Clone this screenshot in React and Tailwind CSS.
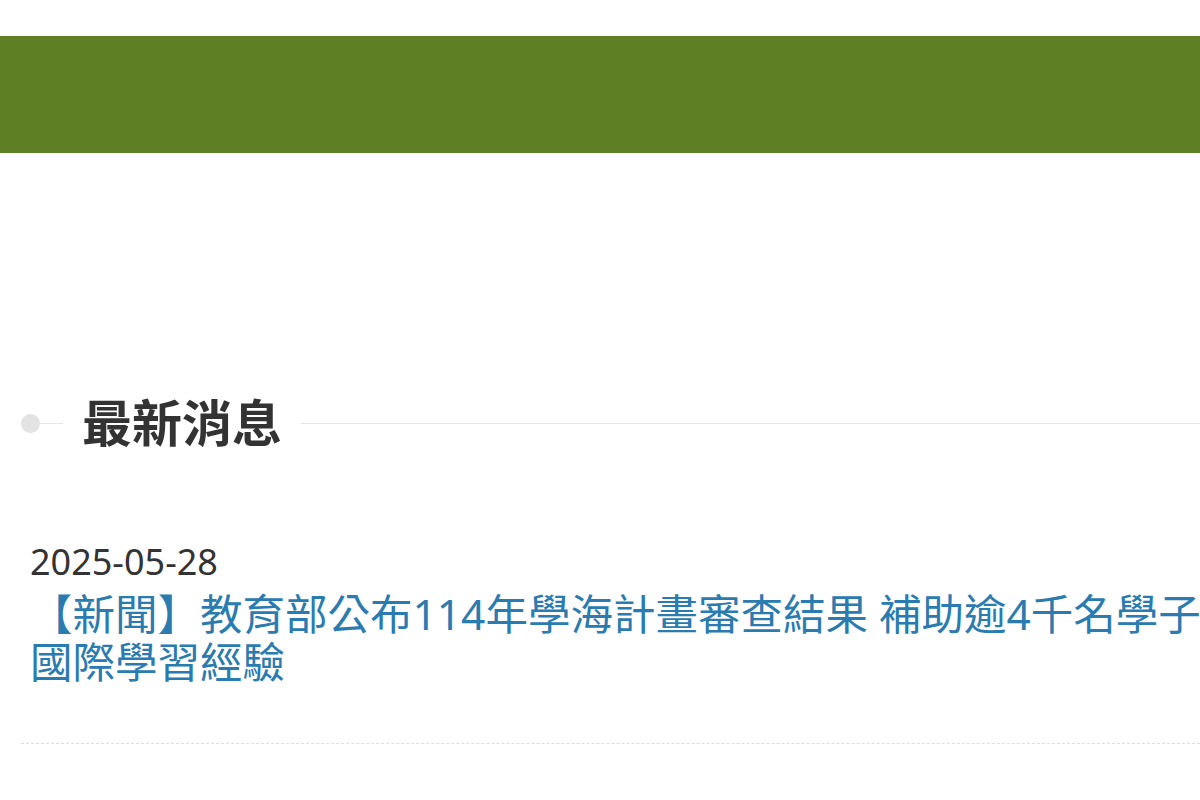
export default function App() {
  return (
    <div
      className="w-[1200px] h-[800px] overflow-hidden bg-white"
      style={{ fontFamily: '"Noto Sans", "Noto Sans CJK TC", sans-serif' }}
    >
      <div className="h-[36px]" />
      <div className="h-[117px] bg-[#5e7f24]" />

      <div className="w-[1300px] pl-[21px] pt-[242px]">
        {/* 區塊標題 */}
        <div className="flex items-center">
          <span className="w-[19px] h-[19px] rounded-full bg-[#e3e3e3] shrink-0" />
          <span className="w-[23px] h-px bg-[#e5e5e5] shrink-0" />
          <h2 className="px-[19px] text-[50px] leading-[56px] font-bold text-[#333]">最新消息</h2>
          <span className="flex-grow h-px bg-[#e5e5e5]" />
        </div>

        {/* 消息列表 */}
        <ul className="mt-[89px]">
          <li className="pl-[9px] pb-[57px] border-b border-dashed border-[#dddddd]">
            <div className="text-[36px] leading-[44px] text-[#333]">2025-05-28</div>
            <a href="#" className="block mt-[6px] w-[1290px] text-[42.5px] leading-[48px] text-[#2a7bb0]">
              【新聞】教育部公布114年學海計畫審查結果 補助逾4千名學子累積國際學習經驗
            </a>
          </li>
        </ul>
      </div>
    </div>
  );
}
